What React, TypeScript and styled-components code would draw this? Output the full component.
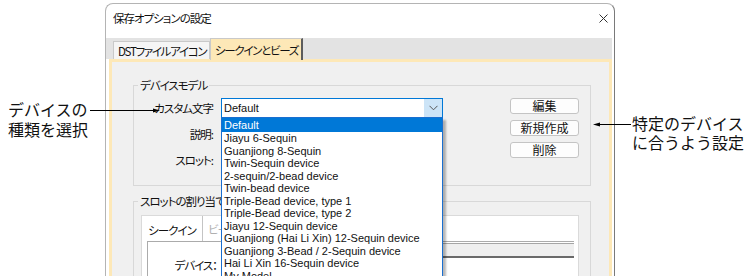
import React from 'react'
import styled, { createGlobalStyle } from 'styled-components'

const GlobalStyle = createGlobalStyle`
  html, body {
    margin: 0;
    padding: 0;
    background: #fff;
  }
  * {
    box-sizing: border-box;
  }
`

const jp = `"Noto Sans CJK JP", "Noto Sans", sans-serif`
const latin = `"Liberation Sans", Arial, sans-serif`

const Page = styled.div`
  position: relative;
  width: 749px;
  height: 276px;
  overflow: hidden;
  display: flex;
  align-items: flex-start;
  background: #fff;
`

const Note = styled.div<{ $width: number; $top: number; $left: number; $lead: number }>`
  flex: none;
  width: ${({ $width }) => $width}px;
  padding-top: ${({ $top }) => $top}px;
  padding-left: ${({ $left }) => $left}px;
  font-family: ${jp};
  font-size: 16px;
  line-height: ${({ $lead }) => $lead}px;
  color: #111;
  white-space: nowrap;
`

const Pointer = styled.svg<{ $x: number; $y: number }>`
  position: absolute;
  left: ${({ $x }) => $x}px;
  top: ${({ $y }) => $y}px;
  z-index: 10;
  overflow: visible;
`

const Window = styled.div`
  flex: none;
  margin-top: 3px;
  width: 510px;
  height: 300px;
  display: flex;
  flex-direction: column;
  background: #fff;
  border: 1px solid #b4b4b4;
  border-right-color: #7a7a7a;
  border-bottom: none;
  border-radius: 8px 8px 0 0;
  font-family: ${jp};
  font-feature-settings: 'palt' 1;
  font-size: 11.5px;
  letter-spacing: -1px;
  color: #111;
`

const TitleBar = styled.div`
  height: 34px;
  display: flex;
  align-items: flex-start;
  justify-content: space-between;
  padding: 6px 6px 0 7px;
  line-height: 16px;
`

const CloseIcon = styled.svg`
  margin-top: 4px;
`

const TabStrip = styled.div`
  height: 21px;
  margin-right: 2px;
  display: flex;
  align-items: flex-end;
  background: #e3e3e3;
  position: relative;
  z-index: 2;
`

const Tab = styled.div<{ $active?: boolean; $width: number }>`
  width: ${({ $width }) => $width}px;
  height: ${({ $active }) => ($active ? 22 : 18)}px;
  margin-bottom: ${({ $active }) => ($active ? -1 : 0)}px;
  margin-left: ${({ $active }) => ($active ? 0 : 7)}px;
  padding-left: 4px;
  display: flex;
  align-items: center;
  letter-spacing: -1.3px;
  background: ${({ $active }) => ($active ? '#fde8b7' : '#f5f5f5')};
  border: 1px solid #c9c9c9;
  border-bottom: none;
  border-right: ${({ $active }) => ($active ? '2px solid #5c5c5c' : '1px solid #c9c9c9')};
  white-space: nowrap;
  overflow: hidden;
`

const Panel = styled.div`
  flex: 1;
  margin: 0 2px 0 3px;
  padding: 15px 18px 0 21px;
  background: #f0f0f0;
  border: 3px solid #fde8b7;
  border-bottom: none;
  display: flex;
  flex-direction: column;
`

const Group = styled.fieldset<{ $height: number; $gap: number }>`
  margin: ${({ $gap }) => $gap}px 0 0 0;
  padding: 5px 0 0 0;
  height: ${({ $height }) => $height}px;
  min-width: 0;
  border: 1px solid #d8d8d8;
  display: flex;
  align-items: flex-start;
  position: relative;
`

const Legend = styled.legend`
  margin-left: 4px;
  padding: 0 2px;
  line-height: 16px;
`

const FormGrid = styled.div`
  display: grid;
  grid-template-columns: 79px 222px;
  grid-auto-rows: 20px;
  column-gap: 8px;
  row-gap: 6px;
`

const FieldLabel = styled.div`
  text-align: right;
  line-height: 20px;
  white-space: nowrap;
`

const Field = styled.div`
  background: #fff;
  border: 1px solid #c8c8c8;
`

const Combo = styled.div`
  position: relative;
  height: 20px;
  display: flex;
  background: #fff;
  border: 1px solid #0078d7;
  font-family: ${latin};
  font-size: 11px;
  letter-spacing: 0;
  line-height: 18px;
`

const ComboText = styled.span`
  padding-left: 2px;
  flex: 1;
`

const ComboArrow = styled.span`
  width: 18px;
  display: flex;
  align-items: center;
  justify-content: center;
  background: #cce4f7;
`

const DropList = styled.ul`
  position: absolute;
  top: 18px;
  left: -1px;
  width: 222px;
  height: 170px;
  margin: 0;
  padding: 0;
  list-style: none;
  background: #fff;
  border: 1px solid #1a6fd0;
  box-shadow: 3px 3px 2px rgba(0, 0, 0, 0.28);
  z-index: 5;
`

const DropItem = styled.li<{ $selected?: boolean }>`
  height: ${({ $selected }) => ($selected ? 14 : 12.5)}px;
  line-height: ${({ $selected }) => ($selected ? 14 : 12.5)}px;
  padding-left: 2px;
  white-space: nowrap;
  font-family: ${latin};
  font-size: 11px;
  color: ${({ $selected }) => ($selected ? '#fff' : '#111')};
  background: ${({ $selected }) => ($selected ? '#0078d7' : 'transparent')};
`

const ButtonStack = styled.div`
  margin-left: auto;
  margin-right: 11px;
  display: flex;
  flex-direction: column;
  gap: 6px;
`

const Button = styled.button`
  width: 69px;
  height: 16px;
  padding: 0;
  border: 1px solid #c4c4c4;
  border-radius: 3px;
  background: #fdfdfd;
  font-family: ${jp};
  font-size: 12px;
  letter-spacing: 0;
  line-height: 14px;
  color: #111;
`

const InnerTabs = styled.div`
  margin: 1px 11px 0 7px;
  flex: 1;
  height: 80px;
  display: flex;
  flex-direction: column;
  background: #fff;
  border: 1px solid #dadada;
  border-bottom: none;
`

const InnerTabRow = styled.div`
  height: 25px;
  display: flex;
  align-items: center;
`

const InnerTab = styled.div<{ $disabled?: boolean }>`
  width: ${({ $disabled }) => ($disabled ? 'auto' : '61px')};
  height: 100%;
  display: flex;
  align-items: center;
  justify-content: center;
  padding: ${({ $disabled }) => ($disabled ? '0 0 0 5px' : '2px 0 0 0')};
  color: ${({ $disabled }) => ($disabled ? '#b0b0b0' : '#111')};
  border-right: ${({ $disabled }) => ($disabled ? 'none' : '1px solid #c4c4c4')};
`

const TabPage = styled.div`
  flex: 1;
  margin: 0 4px 0 5px;
  border-top: 1px solid #ababab;
  border-left: 1px solid #ababab;
  display: flex;
  flex-direction: column;
`

const HeaderBand = styled.div`
  margin: 1px 0 0 78px;
  height: 15px;
  background: #efefef;
  border-top: 1px solid #a6a6a6;
  border-bottom: 2px solid #6a6a6a;
`

const DeviceRow = styled.div`
  display: flex;
  line-height: 14px;
`

const DeviceLabel = styled.span`
  width: 69px;
  text-align: right;
`

const devices = [
  'Default',
  'Jiayu 6-Sequin',
  'Guanjiong 8-Sequin',
  'Twin-Sequin device',
  '2-sequin/2-bead device',
  'Twin-bead device',
  'Triple-Bead device, type 1',
  'Triple-Bead device, type 2',
  'Jiayu 12-Sequin device',
  'Guanjiong (Hai Li Xin) 12-Sequin device',
  'Guanjiong 3-Bead / 2-Sequin device',
  'Hai Li Xin 16-Sequin device',
  'My Model',
]

function App() {
  return (
    <>
      <GlobalStyle />
      <Page>
        <Note $width={105} $top={99} $left={8} $lead={20}>
          デバイスの
          <br />
          種類を選択
        </Note>

        <Window>
          <TitleBar>
            <span>保存オプションの設定</span>
            <CloseIcon width="9" height="9" viewBox="0 0 9 9">
              <path d="M0.5 0.5 L8.5 8.5 M8.5 0.5 L0.5 8.5" stroke="#333" strokeWidth="1" />
            </CloseIcon>
          </TitleBar>

          <TabStrip>
            <Tab $width={97}>DSTファイルアイコン</Tab>
            <Tab $width={93} $active>
              シークインとビーズ
            </Tab>
          </TabStrip>

          <Panel>
            <Group $height={109} $gap={0}>
              <Legend>デバイスモデル</Legend>
              <FormGrid>
                <FieldLabel>カスタム文字</FieldLabel>
                <Combo>
                  <ComboText>Default</ComboText>
                  <ComboArrow>
                    <svg width="9" height="6" viewBox="0 0 9 6">
                      <path d="M0.5 0.8 L4.5 4.8 L8.5 0.8" fill="none" stroke="#555" strokeWidth="1" />
                    </svg>
                  </ComboArrow>
                  <DropList>
                    {devices.map((name, i) => (
                      <DropItem key={name} $selected={i === 0}>
                        {name}
                      </DropItem>
                    ))}
                  </DropList>
                </Combo>
                <FieldLabel>説明:</FieldLabel>
                <Field />
                <FieldLabel>スロット:</FieldLabel>
                <Field />
              </FormGrid>
              <ButtonStack>
                <Button>編集</Button>
                <Button>新規作成</Button>
                <Button>削除</Button>
              </ButtonStack>
            </Group>

            <Group $height={100} $gap={7}>
              <Legend>スロットの割り当て</Legend>
              <InnerTabs>
                <InnerTabRow>
                  <InnerTab>シークイン</InnerTab>
                  <InnerTab $disabled>ビーズ</InnerTab>
                </InnerTabRow>
                <TabPage>
                  <HeaderBand />
                  <DeviceRow>
                    <DeviceLabel>デバイス：</DeviceLabel>
                  </DeviceRow>
                </TabPage>
              </InnerTabs>
            </Group>
          </Panel>
        </Window>

        <Note $width={134} $top={114} $left={17} $lead={19}>
          特定のデバイス
          <br />
          に合うよう設定
        </Note>

        <Pointer $x={89} $y={105} width="72" height="10" viewBox="0 0 72 10">
          <line x1="1" y1="5.5" x2="66" y2="5.5" stroke="#000" strokeWidth="1" />
          <polygon points="64,3.5 71,5.5 64,7.5" fill="#000" />
        </Pointer>
        <Pointer $x={592} $y={119} width="40" height="10" viewBox="0 0 40 10">
          <line x1="6" y1="5.5" x2="39" y2="5.5" stroke="#000" strokeWidth="1" />
          <polygon points="1,5.5 8,3.5 8,7.5" fill="#000" />
        </Pointer>
      </Page>
    </>
  )
}

export default App
